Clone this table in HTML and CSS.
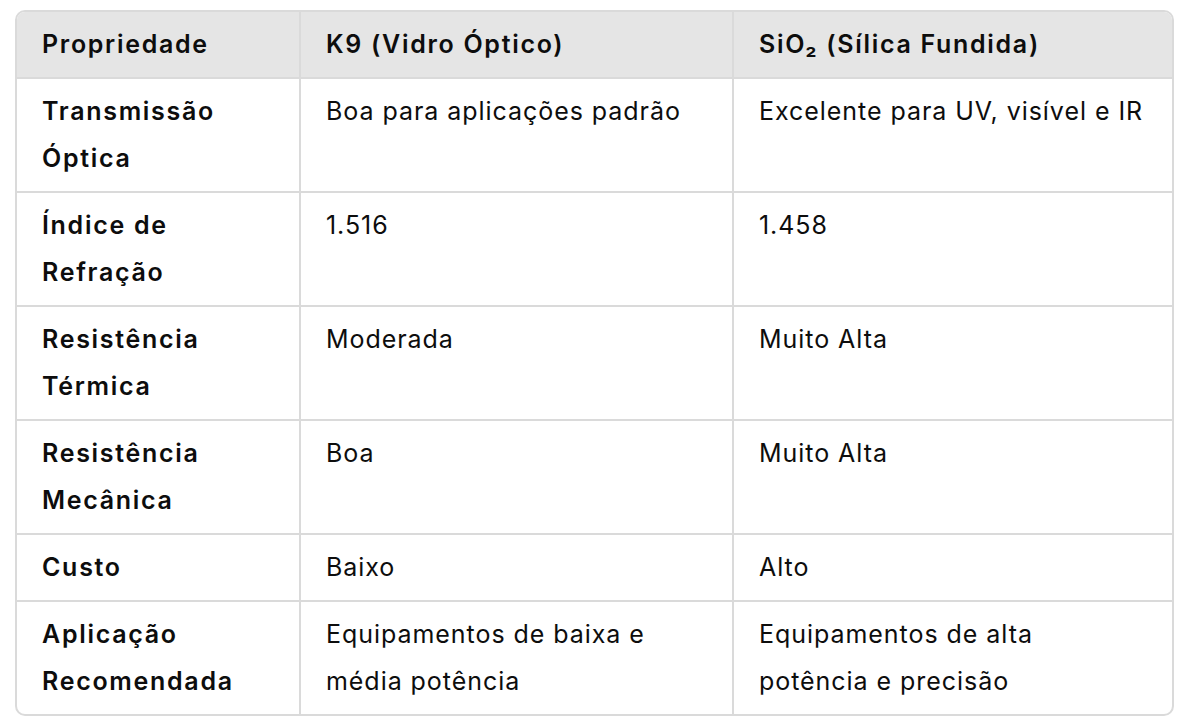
FILE: index.html
```html
<!DOCTYPE html>
<html lang="pt">
<head>
<meta charset="utf-8">
<link rel="stylesheet" href="styles.css">
</head>
<body>
<div class="table-wrap">
  <table class="cmp">
    <colgroup>
      <col class="c1">
      <col class="c2">
      <col class="c3">
    </colgroup>
    <thead>
      <tr>
        <th>Propriedade</th>
        <th>K9 (Vidro Óptico)</th>
        <th>SiO₂ (Sílica Fundida)</th>
      </tr>
    </thead>
    <tbody>
      <tr>
        <td class="prop">Transmissão Óptica</td>
        <td>Boa para aplicações padrão</td>
        <td>Excelente para UV, visível e IR</td>
      </tr>
      <tr>
        <td class="prop">Índice de Refração</td>
        <td>1.516</td>
        <td>1.458</td>
      </tr>
      <tr>
        <td class="prop">Resistência Térmica</td>
        <td>Moderada</td>
        <td>Muito Alta</td>
      </tr>
      <tr>
        <td class="prop">Resistência Mecânica</td>
        <td>Boa</td>
        <td>Muito Alta</td>
      </tr>
      <tr>
        <td class="prop">Custo</td>
        <td>Baixo</td>
        <td>Alto</td>
      </tr>
      <tr>
        <td class="prop">Aplicação Recomendada</td>
        <td>Equipamentos de baixa e média potência</td>
        <td>Equipamentos de alta potência e precisão</td>
      </tr>
    </tbody>
  </table>
</div>
</body>
</html>
```

FILE: styles.css
```css
html, body {
  margin: 0;
  padding: 0;
  background: #ffffff;
}

body {
  padding: 10px 22px 0 15px;
  font-family: Inter, "Noto Sans", "Liberation Sans", sans-serif;
  color: #0d0d0d;
}

.table-wrap {
  width: 1159px;
  border: 2px solid #dadada;
  border-radius: 10px;
  overflow: hidden;
  box-sizing: border-box;
}

.cmp {
  width: 100%;
  border-collapse: separate;
  border-spacing: 0;
  table-layout: fixed;
  font-size: 25px;
  line-height: 47px;
  letter-spacing: 0.95px;
}

.c1 { width: 284px; }
.c2 { width: 433px; }
.c3 { width: auto; }

.cmp th,
.cmp td {
  text-align: left;
  vertical-align: top;
  padding: 9px 27px 9px 25px;
  border-right: 2px solid #dadada;
  border-bottom: 2px solid #dadada;
}

.cmp th:last-child,
.cmp td:last-child {
  border-right: none;
}

.cmp tbody tr:last-child td {
  border-bottom: none;
}

.cmp th {
  background: #e5e5e5;
  font-weight: 600;
  letter-spacing: 1.7px;
}

.cmp td {
  font-weight: 400;
}

.cmp td.prop {
  font-weight: 600;
  letter-spacing: 1.7px;
}
```
